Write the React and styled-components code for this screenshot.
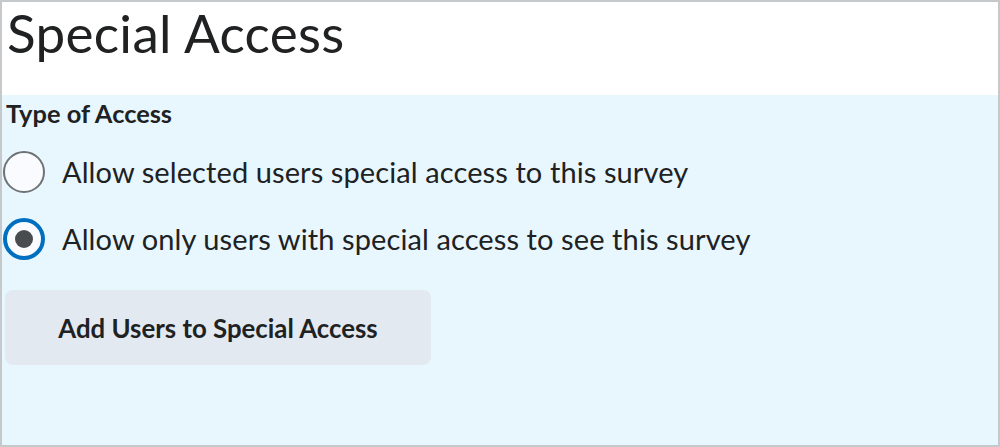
import styled, { createGlobalStyle } from "styled-components";

const GlobalStyle = createGlobalStyle`
  html, body {
    margin: 0;
    padding: 0;
    background: #ffffff;
  }
  * {
    box-sizing: border-box;
  }
`;

export default function App() {
  return (
    <>
      <GlobalStyle />
      <Frame>
        <Title>Special Access</Title>
        <Panel>
          <SectionLabel>Type of Access</SectionLabel>
          <RadioList>
            <RadioRow>
              <Radio />
              <RadioText>Allow selected users special access to this survey</RadioText>
            </RadioRow>
            <RadioRow>
              <Radio checked />
              <RadioText>Allow only users with special access to see this survey</RadioText>
            </RadioRow>
          </RadioList>
          <AddButton>Add Users to Special Access</AddButton>
        </Panel>
      </Frame>
    </>
  );
}

const Frame = styled.div`
  width: 1000px;
  height: 447px;
  border: 2px solid #c6c9cb;
  display: flex;
  flex-direction: column;
  font-family: Lato, "Noto Sans", sans-serif;
  color: #202122;
  overflow: hidden;
`;

const Title = styled.h1`
  margin: 0;
  height: 93px;
  padding: 0 0 0 5px;
  font-size: 53px;
  font-weight: 400;
  line-height: 62px;
  letter-spacing: 0.3px;
`;

const Panel = styled.div`
  flex: 1;
  background: #e8f7fe;
  padding: 4px 0 0 1px;
  display: flex;
  flex-direction: column;
  align-items: flex-start;
`;

const SectionLabel = styled.div`
  font-size: 25.4px;
  font-weight: 700;
  line-height: 28px;
  padding-left: 3px;
`;

const RadioList = styled.div`
  display: flex;
  flex-direction: column;
  gap: 25px;
  margin-top: 24px;
`;

const RadioRow = styled.label`
  display: flex;
  align-items: center;
  gap: 17px;
`;

const Radio = styled.span`
  width: 42px;
  height: 42px;
  border-radius: 50%;
  flex-shrink: 0;
  background: #f9fbff;
  border: ${(p) => (p.checked ? "4px solid #006fbf" : "2px solid #6e7376")};
  display: flex;
  align-items: center;
  justify-content: center;
  &::after {
    content: "";
    display: ${(p) => (p.checked ? "block" : "none")};
    width: 18px;
    height: 18px;
    border-radius: 50%;
    background: #494c4e;
  }
`;

const RadioText = styled.span`
  font-size: 29px;
  line-height: 42px;
  letter-spacing: 0.1px;
`;

const AddButton = styled.button`
  margin-top: 30px;
  margin-left: 2px;
  width: 426px;
  height: 75px;
  border: none;
  border-radius: 8px;
  background: #e3e9f1;
  font-family: Lato, "Noto Sans", sans-serif;
  font-size: 25.8px;
  font-weight: 700;
  color: #202122;
  padding: 0;
  cursor: pointer;
`;
